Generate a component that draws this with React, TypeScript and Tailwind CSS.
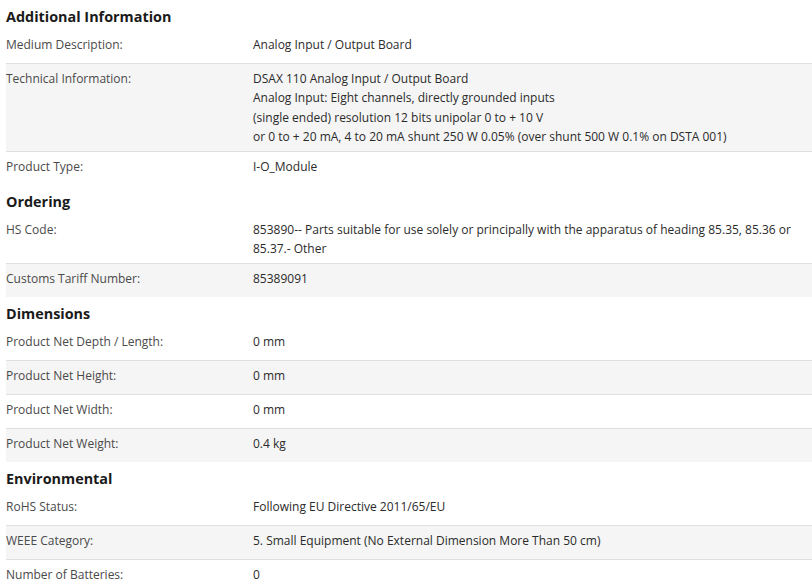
import React from "react";

type Row = { label: string; value: React.ReactNode; multi?: boolean };
type Group = { title: string; rows: Row[] };

const groups: Group[] = [
  {
    title: "Additional Information",
    rows: [
      { label: "Medium Description:", value: "Analog Input / Output Board" },
      {
        label: "Technical Information:",
        multi: true,
        value: (
          <>
            DSAX 110 Analog Input / Output Board
            <br />
            Analog Input: Eight channels, directly grounded inputs
            <br />
            (single ended) resolution 12 bits unipolar 0 to + 10 V
            <br />
            or 0 to + 20 mA, 4 to 20 mA shunt 250 W 0.05% (over shunt 500 W 0.1% on DSTA 001)
          </>
        ),
      },
      { label: "Product Type:", value: "I-O_Module" },
    ],
  },
  {
    title: "Ordering",
    rows: [
      {
        label: "HS Code:",
        multi: true,
        value:
          "853890-- Parts suitable for use solely or principally with the apparatus of heading 85.35, 85.36 or 85.37.- Other",
      },
      { label: "Customs Tariff Number:", value: "85389091" },
    ],
  },
  {
    title: "Dimensions",
    rows: [
      { label: "Product Net Depth / Length:", value: "0 mm" },
      { label: "Product Net Height:", value: "0 mm" },
      { label: "Product Net Width:", value: "0 mm" },
      { label: "Product Net Weight:", value: "0.4 kg" },
    ],
  },
  {
    title: "Environmental",
    rows: [
      { label: "RoHS Status:", value: "Following EU Directive 2011/65/EU" },
      { label: "WEEE Category:", value: "5. Small Equipment (No External Dimension More Than 50 cm)" },
      { label: "Number of Batteries:", value: "0" },
    ],
  },
];

export default function App() {
  return (
    <div className="min-h-[588px] w-[812px] overflow-hidden bg-white pl-[6px] font-['Open_Sans',sans-serif] text-[#2b2b2b]">
      {groups.map((group) => (
        <section key={group.title}>
          <h2 className="h-[30px] pt-[3.5px] text-[14.4px] font-bold leading-[26px] text-[#1a1a1a]">
            {group.title}
          </h2>
          <dl>
            {group.rows.map((row, index) => {
              const last = index === group.rows.length - 1;
              return (
                <div
                  key={row.label}
                  className={`flex text-[12px] leading-[19.5px] ${
                    row.multi ? "items-start py-[4.5px]" : "items-center pb-[6px] pt-[3px]"
                  } ${index % 2 === 1 ? "bg-[#f5f5f5]" : "bg-white"} ${
                    last ? "min-h-[33px]" : "min-h-[34px] border-b border-[#e0e0e0]"
                  }`}
                >
                  <dt className="w-[247px] shrink-0 text-[#4a4a4a]">{row.label}</dt>
                  <dd className="pr-[4px]">{row.value}</dd>
                </div>
              );
            })}
          </dl>
        </section>
      ))}
    </div>
  );
}
